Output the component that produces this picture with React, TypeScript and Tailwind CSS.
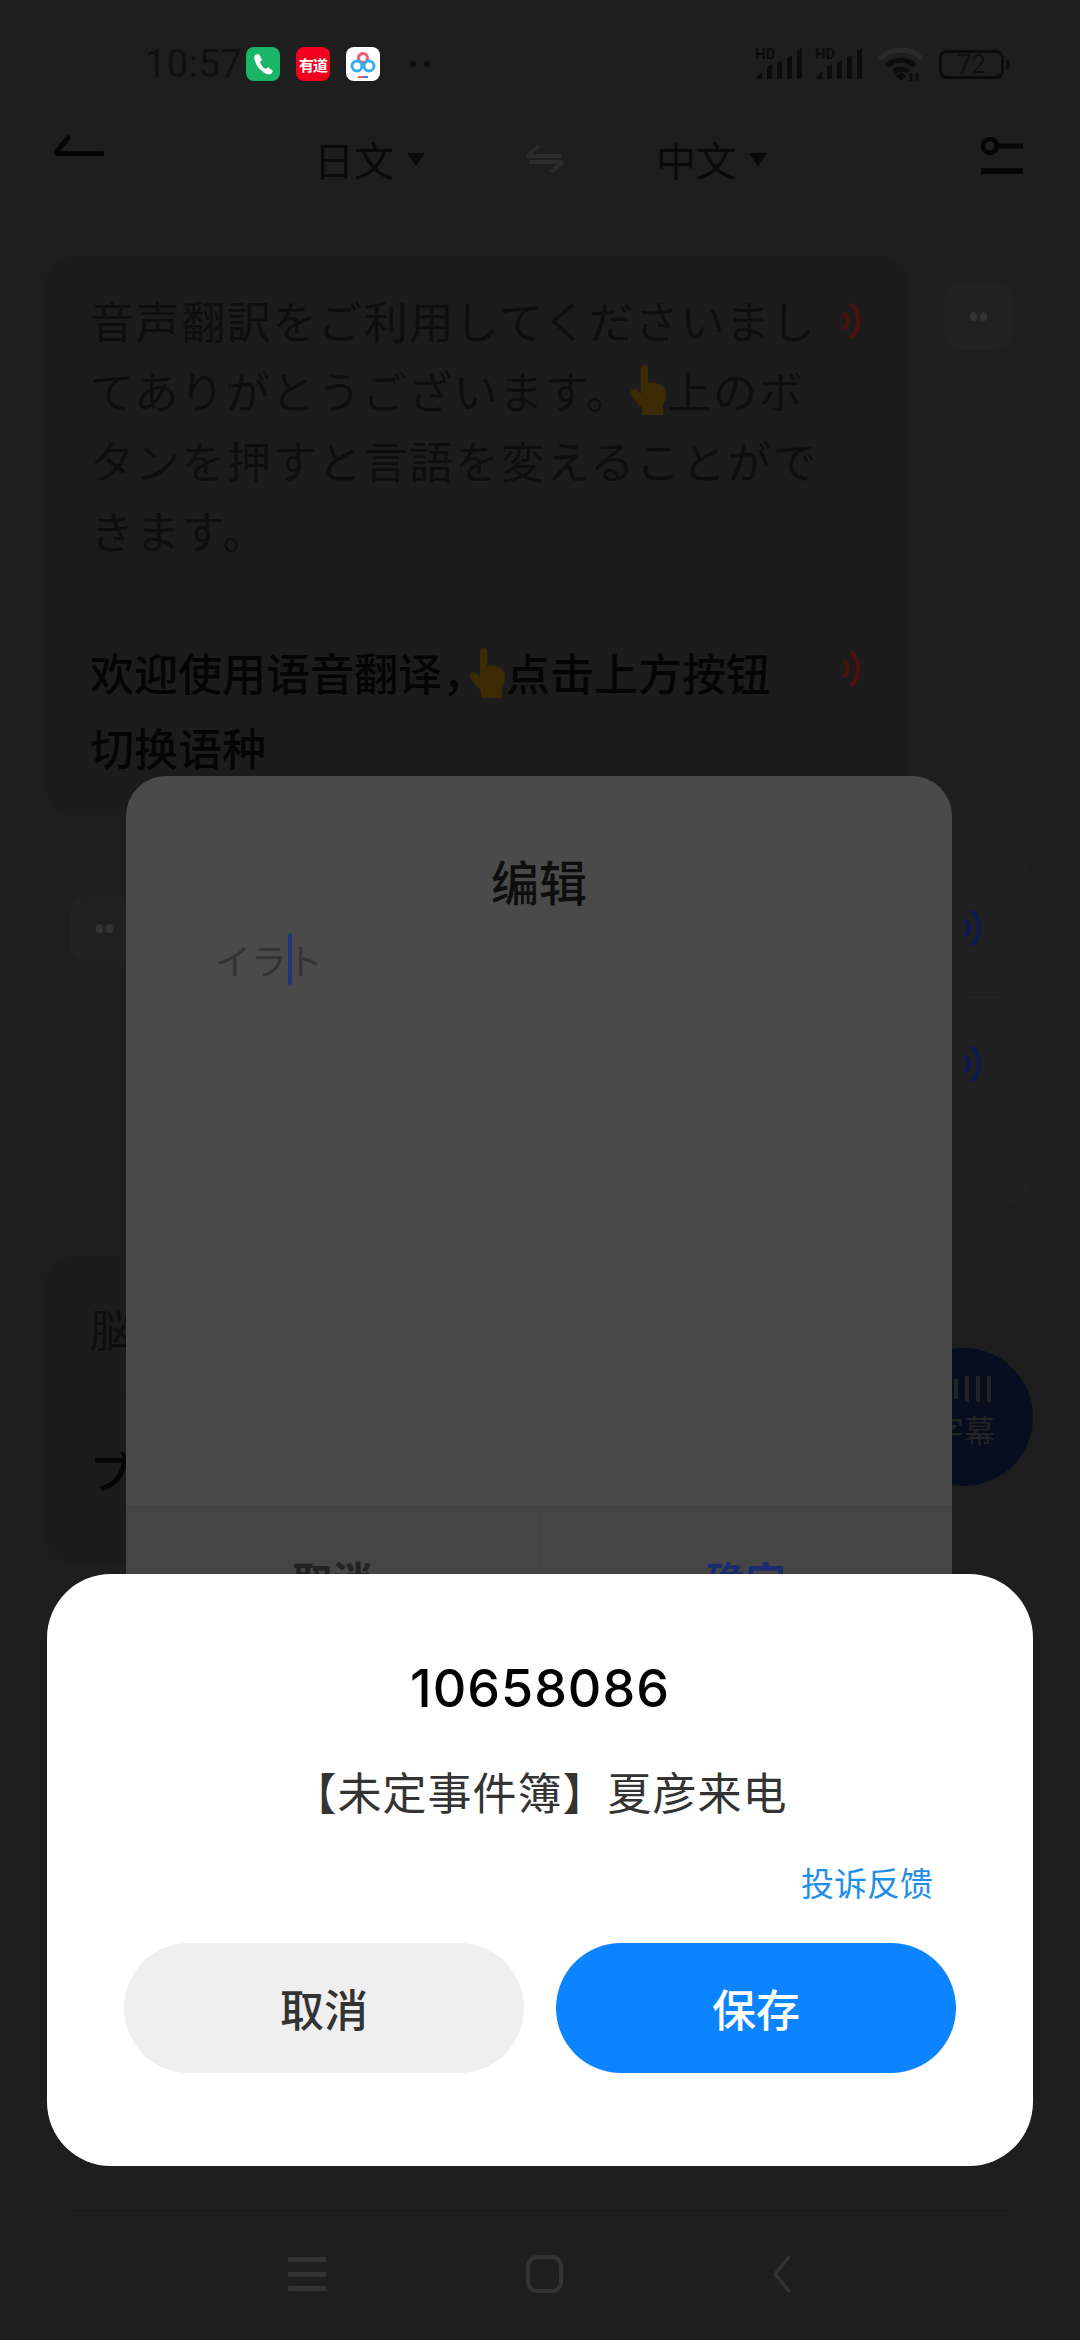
const zh = { fontFamily: '"Noto Sans CJK SC", "Noto Sans", sans-serif' }
const ja = { fontFamily: '"Noto Sans CJK JP", "Noto Sans", sans-serif' }

function Speaker({ color, className }: { color: string; className?: string }) {
  return (
    <svg width="22" height="36" viewBox="0 0 22 36" fill="none" className={className}>
      <path d="M3 11c3.500 4 3.500 10 0 14" stroke={color} strokeWidth="4" strokeLinecap="round" />
      <path d="M10 2c8 8 8 24 0 32" stroke={color} strokeWidth="4" strokeLinecap="round" />
    </svg>
  )
}

function Hand({ className }: { className?: string }) {
  return (
    <svg width="40" height="50" viewBox="0 0 40 50" className={className}>
      <path
        d="M12 3c0-4 7-4 7 0v15c5-1 9 0 13 2 4 2 5 5 5 9 0 6-2 9-3 12v9H13v-7C9 38 3 33 2 28c-1-4 3-5 6-3l4 4z"
        fill="#3b2a02"
      />
    </svg>
  )
}

function Dots({ className }: { className?: string }) {
  return (
    <div className={`flex gap-[3px] ${className ?? ''}`}>
      <span className="h-[9px] w-[7px] rounded-full bg-[#333333]" />
      <span className="h-[9px] w-[7px] rounded-full bg-[#333333]" />
    </div>
  )
}

function SignalBars() {
  return (
    <div className="relative h-[34px] w-[48px]">
      <span className="absolute left-0 top-0 text-[15px] font-bold leading-[15px] text-[#0c0c0c]" style={{ fontFamily: 'Roboto, sans-serif' }}>
        HD
      </span>
      <svg width="48" height="34" viewBox="0 0 48 34" className="absolute left-0 top-0">
        <path d="M2 32v-3l5-4v7zM12 32V20l5-3v15zM22 32V16l5-3v19zM32 32V11l5-3v24zM42 32V4l5-3v31z" fill="#0c0c0c" />
      </svg>
    </div>
  )
}

function StatusBar() {
  return (
    <div className="flex h-[128px] items-center pl-[145px] pr-[76px]" style={{ paddingTop: 0 }}>
      <span className="w-[101px] text-[38px] leading-none tracking-[0.5px] text-[#101010]" style={{ fontFamily: 'Roboto, sans-serif' }}>
        10:57
      </span>
      <div className="flex h-[34px] w-[34px] items-center justify-center rounded-[8px] bg-[#1bb567]">
        <svg width="22" height="22" viewBox="0 0 22 22">
          <path d="M3 2l4-1 3 6-2 2c1 3 3 6 6 7l2-2 5 4-2 3c-2 1-5 0-8-2C7 16 4 12 3 8c-1-2-1-4 0-6z" fill="#fff" />
        </svg>
      </div>
      <div className="ml-[16px] flex h-[34px] w-[34px] items-center justify-center rounded-[8px] bg-[#f2001f]">
        <span className="text-[15px] font-bold leading-none tracking-[-1px] text-white" style={zh}>有道</span>
      </div>
      <div className="ml-[16px] flex h-[34px] w-[34px] items-center justify-center rounded-[8px] bg-white">
        <svg width="28" height="30" viewBox="0 0 28 30" fill="none">
          <circle cx="14" cy="9" r="4.500" stroke="#ee5a6f" strokeWidth="3" />
          <circle cx="8" cy="17" r="5" stroke="#35aef0" strokeWidth="3" />
          <circle cx="20" cy="17" r="5" stroke="#35aef0" strokeWidth="3" />
          <rect x="9" y="27" width="5" height="2" fill="#ee5a6f" />
          <rect x="14" y="27" width="5" height="2" fill="#3b82f6" />
        </svg>
      </div>
      <div className="ml-[30px] flex gap-[8px]">
        <span className="h-[6px] w-[6px] rounded-full bg-[#0c0c0c]" />
        <span className="h-[6px] w-[6px] rounded-full bg-[#0c0c0c]" />
      </div>
      <div className="ml-auto flex items-center">
        <SignalBars />
        <div className="ml-[12px]"><SignalBars /></div>
        <svg width="46" height="36" viewBox="0 0 46 36" fill="none" className="ml-[15px]">
          <path d="M2 13C13 1 33 1 44 13" stroke="#2a2a2a" strokeWidth="5" />
          <path d="M9 20c8-8 20-8 28 0" stroke="#0c0c0c" strokeWidth="5" />
          <path d="M16 26c4-4 10-4 14 0" stroke="#0c0c0c" strokeWidth="5" />
          <path d="M18 30l5-4 5 4-5 5z" fill="#0c0c0c" />
          <path d="M33 27v8M39 27v8" stroke="#0c0c0c" strokeWidth="2.500" />
        </svg>
        <div className="relative ml-[15px] flex h-[29px] w-[65px] items-center justify-center rounded-[8px] border-[3px] border-[#0c0c0c]">
          <span className="text-[26px] leading-none text-[#101010]" style={{ fontFamily: 'Roboto, sans-serif' }}>72</span>
          <span className="absolute right-[-9px] h-[9px] w-[4px] rounded-r-[2px] bg-[#0c0c0c]" />
        </div>
      </div>
    </div>
  )
}

function LangButton({ label }: { label: string }) {
  return (
    <div className="flex items-center gap-[13px]">
      <span className="text-[40px] leading-none text-[#0a0a0a]" style={zh}>{label}</span>
      <svg width="18" height="13" viewBox="0 0 18 13"><path d="M0 0h18L9 13z" fill="#0a0a0a" /></svg>
    </div>
  )
}

function TopNav() {
  return (
    <div className="relative flex h-[62px] items-center justify-center">
      <svg width="50" height="22" viewBox="0 0 50 22" fill="none" className="absolute left-[54px] top-[7px]">
        <path d="M2 17L14 3" stroke="#060606" strokeWidth="5" strokeLinecap="round" />
        <path d="M3 18.500h45" stroke="#060606" strokeWidth="5" strokeLinecap="round" />
      </svg>
      <div className="flex items-center pl-[1px]">
        <LangButton label="日文" />
        <svg width="38" height="28" viewBox="0 0 38 28" fill="none" className="ml-[101px] mr-[92px]">
          <path d="M1 11h34M13 1L1 11M37 17H3M25 27l12-10" stroke="#2b2b2b" strokeWidth="4" />
        </svg>
        <LangButton label="中文" />
      </div>
      <svg width="42" height="38" viewBox="0 0 42 38" fill="none" className="absolute left-[981px] top-[9px]">
        <circle cx="9" cy="9" r="7" stroke="#060606" strokeWidth="4.500" />
        <path d="M16 9h24" stroke="#060606" strokeWidth="5" strokeLinecap="round" />
        <path d="M2 34h38" stroke="#060606" strokeWidth="6" strokeLinecap="round" />
      </svg>
    </div>
  )
}

function Transcript() {
  return (
    <div className="flex flex-1 flex-col overflow-hidden pl-[45px] pt-[65px]">
      {/* source language bubble */}
      <div className="flex items-start">
        <div className="w-[864px] rounded-[32px] bg-[#1c1c1c] px-[45px] pb-[30px] pt-[30px]">
          <div className="flex justify-between border-b border-[#1a1a1a] pb-[36px]">
            <div className="text-[44px] leading-[70px] tracking-[1.600px] text-[#0e0e0e]" style={ja}>
              <div>音声翻訳をご利用してくださいまし</div>
              <div className="flex items-center">てありがとうございます。<Hand className="ml-[-2px] mr-[-2px]" />上のボ</div>
              <div>タンを押すと言語を変えることがで</div>
              <div>きます。</div>
            </div>
            <Speaker color="#4e120c" className="mt-[18px] shrink-0" />
          </div>
          <div className="flex justify-between pt-[33px]">
            <div className="text-[44px] font-medium leading-[75px] text-[#050505]" style={zh}>
              <div className="flex items-center">欢迎使用语音翻译，<Hand className="ml-[-18px] mr-[-2px]" />点击上方按钮</div>
              <div>切换语种</div>
            </div>
            <Speaker color="#4e120c" className="mt-[16px] shrink-0" />
          </div>
        </div>
        <div className="ml-[35px] mt-[28px] flex h-[67px] w-[68px] items-center justify-center rounded-[16px] bg-[#212121]">
          <Dots />
        </div>
      </div>

      {/* translated bubble, its text sits behind the editor */}
      <div className="mt-[40px] flex items-start">
        <div className="ml-[25px] mt-[41px] flex h-[65px] w-[68px] items-center justify-center rounded-[16px] bg-[#212121]">
          <Dots />
        </div>
        <div className="h-[352px] w-[895px] rounded-[32px] bg-[#202020] pl-[825px] pt-[55px]">
          <div className="flex h-[85px] w-[40px] items-start border-b border-[#1b1b1b]">
            <Speaker color="#0b1a52" />
          </div>
          <Speaker color="#0b1a52" className="mt-[51px]" />
        </div>
      </div>

      {/* earlier exchange */}
      <div className="mt-[48px] w-[864px] rounded-[32px] bg-[#1c1c1c] pl-[45px] pt-[38px]">
        <div className="border-b border-[#1a1a1a] pb-[34px] text-[44px] leading-[70px] text-[#0e0e0e]" style={ja}>脳</div>
        <div className="pb-[60px] pt-[37px] text-[44px] font-medium leading-[70px] text-[#050505]" style={ja}>ブ</div>
      </div>
    </div>
  )
}

function BottomNav() {
  return (
    <div className="mx-[68px] flex h-[130px] items-start justify-center border-t border-[#191919] pt-[44px]">
      <div className="flex h-[38px] w-[38px] flex-col justify-between py-[2px]">
        <span className="h-[5px] rounded-[1px] bg-[#333333]" />
        <span className="h-[5px] rounded-[1px] bg-[#333333]" />
        <span className="h-[5px] rounded-[1px] bg-[#333333]" />
      </div>
      <div className="ml-[200px] h-[38px] w-[37px] rounded-[11px] border-[4px] border-[#333333]" />
      <svg width="20" height="38" viewBox="0 0 20 38" fill="none" className="ml-[209px]">
        <path d="M17 2L3 19l14 17" stroke="#333333" strokeWidth="3.500" strokeLinecap="round" strokeLinejoin="round" />
      </svg>
    </div>
  )
}

export default function App() {
  return (
    <div className="relative flex h-[2340px] w-[1080px] flex-col overflow-hidden bg-[#1e1e1e]" style={zh}>
      <StatusBar />
      <TopNav />
      <Transcript />
      <BottomNav />

      {/* floating subtitle button */}
      <div className="absolute left-[895px] top-[1348px] flex h-[138px] w-[138px] flex-col items-center rounded-full bg-[#060e20] pt-[28px]">
        <div className="ml-[6px] flex h-[26px] items-center gap-[7px]">
          <span className="h-[12px] w-[4px] bg-[#232323]" />
          <span className="h-[20px] w-[4px] bg-[#232323]" />
          <span className="h-[26px] w-[4px] bg-[#232323]" />
          <span className="h-[26px] w-[4px] bg-[#232323]" />
          <span className="h-[26px] w-[4px] bg-[#232323]" />
        </div>
        <span className="mt-[11px] text-[31px] leading-none text-[#232323]">字幕</span>
      </div>

      {/* text editor sheet */}
      <div className="absolute left-[126px] top-[776px] flex h-[830px] w-[826px] flex-col overflow-hidden rounded-t-[40px] bg-[#4a4a4a]">
        <div className="pt-[74px] text-center text-[48px] font-medium leading-[60px] text-[#0e0e0e]">编辑</div>
        <div className="flex flex-1 items-start pl-[89px] pt-[25px] text-[36px] leading-[48px] text-[#333333]" style={ja}>
          <div className="relative">
            <span className="tracking-[0px]">イラ</span>
            <span className="absolute left-[73px] top-[-2px] h-[52px] w-[4px] rounded-full bg-[#1f3580]" />
            <span>ト</span>
          </div>
        </div>
        <div className="flex h-[101px] bg-[#454545]">
          <div className="flex-1 border-r border-[#424242] pt-[49px] text-center text-[40px] font-bold leading-[50px] text-[#222222]">取消</div>
          <div className="flex-1 pt-[49px] text-center text-[40px] font-bold leading-[50px] text-[#1a2b70]">确定</div>
        </div>
      </div>

      {/* incoming call note dialog */}
      <div className="absolute left-[47px] top-[1574px] flex h-[592px] w-[986px] flex-col items-center rounded-[64px] bg-white px-[77px] pt-[80px]">
        <div className="text-[52px] font-medium leading-[70px] tracking-[1px] text-black" style={{ fontFamily: 'Inter, sans-serif' }}>10658086</div>
        <div className="mt-[36px] text-[44px] leading-[62px] tracking-[1px] text-[#333333]">【未定事件簿】夏彦来电</div>
        <div className="mt-[38px] self-end pr-[23px] text-[33px] leading-[44px] text-[#1f8fe8]">投诉反馈</div>
        <div className="mt-[39px] flex w-full gap-[32px]">
          <div className="flex h-[130px] flex-1 items-center justify-center rounded-full bg-[#efefef] text-[44px] font-medium text-[#333333]">取消</div>
          <div className="flex h-[130px] flex-1 items-center justify-center rounded-full bg-[#0d84ff] text-[44px] font-medium text-white">保存</div>
        </div>
      </div>
    </div>
  )
}
